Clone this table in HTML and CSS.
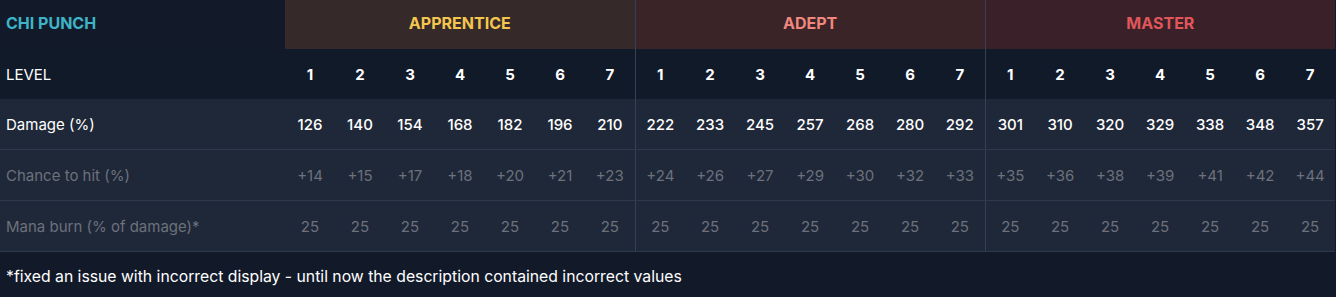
FILE: index.html
```html
<!DOCTYPE html>
<html>
<head>
<meta charset="utf-8">
<link rel="stylesheet" href="styles.css">
</head>
<body>
<table class="skill">
  <colgroup>
    <col class="c-name">
    <col span="21" class="c-lvl">
  </colgroup>
  <thead>
    <tr class="tiers">
      <th class="title">CHI PUNCH</th>
      <th colspan="7" class="tier apprentice">APPRENTICE</th>
      <th colspan="7" class="tier adept sep">ADEPT</th>
      <th colspan="7" class="tier master sep">MASTER</th>
    </tr>
    <tr class="levels">
      <th class="label">LEVEL</th>
      <th>1</th><th>2</th><th>3</th><th>4</th><th>5</th><th>6</th><th>7</th>
      <th class="sep">1</th><th>2</th><th>3</th><th>4</th><th>5</th><th>6</th><th>7</th>
      <th class="sep">1</th><th>2</th><th>3</th><th>4</th><th>5</th><th>6</th><th>7</th>
    </tr>
  </thead>
  <tbody>
    <tr class="main">
      <td class="label">Damage (%)</td>
      <td>126</td><td>140</td><td>154</td><td>168</td><td>182</td><td>196</td><td>210</td>
      <td class="sep">222</td><td>233</td><td>245</td><td>257</td><td>268</td><td>280</td><td>292</td>
      <td class="sep">301</td><td>310</td><td>320</td><td>329</td><td>338</td><td>348</td><td>357</td>
    </tr>
    <tr class="dim">
      <td class="label">Chance to hit (%)</td>
      <td>+14</td><td>+15</td><td>+17</td><td>+18</td><td>+20</td><td>+21</td><td>+23</td>
      <td class="sep">+24</td><td>+26</td><td>+27</td><td>+29</td><td>+30</td><td>+32</td><td>+33</td>
      <td class="sep">+35</td><td>+36</td><td>+38</td><td>+39</td><td>+41</td><td>+42</td><td>+44</td>
    </tr>
    <tr class="dim">
      <td class="label">Mana burn (% of damage)*</td>
      <td>25</td><td>25</td><td>25</td><td>25</td><td>25</td><td>25</td><td>25</td>
      <td class="sep">25</td><td>25</td><td>25</td><td>25</td><td>25</td><td>25</td><td>25</td>
      <td class="sep">25</td><td>25</td><td>25</td><td>25</td><td>25</td><td>25</td><td>25</td>
    </tr>
  </tbody>
</table>
<p class="note">*fixed an issue with incorrect display - until now the description contained incorrect values</p>
</body>
</html>
```

FILE: styles.css
```css
html, body {
  margin: 0;
  padding: 0;
  background: #121a29;
  font-family: "Inter", "Noto Sans", sans-serif;
  color: #ffffff;
}

.skill {
  border-collapse: collapse;
  table-layout: fixed;
  width: 1335px;
}

.c-name { width: 285px; }
.c-lvl { width: 50px; }

.skill th,
.skill td {
  padding: 0;
  text-align: center;
  white-space: nowrap;
}

.skill .label,
.skill .title {
  text-align: left;
  padding-left: 6px;
}

.tiers th {
  height: 45px;
  padding-bottom: 4px;
  font-size: 16px;
  font-weight: 700;
}

.title {
  color: #3db4c7;
  background: #121a29;
}

.apprentice { background: #352a29; color: #f5c64f; }
.adept { background: #3a2428; color: #f0877e; }
.master { background: #3a2029; color: #e0565a; }

.levels th {
  height: 50px;
  font-size: 15px;
  font-weight: 700;
  background: #111a29;
}

.levels th.label {
  font-weight: 400;
  font-size: 15px;
}

tbody tr {
  background: #1f2838;
}

tbody td {
  height: 50px;
  border-bottom: 1px solid #2d3a4d;
  font-size: 15px;
}

.main td {
  color: #ffffff;
  font-weight: 500;
}

.main td.label { font-weight: 400; }

.dim td {
  color: #6c717c;
}

.skill .sep {
  border-left: 1px solid #334155;
}

.note {
  margin: 0;
  padding: 15px 0 0 6px;
  font-size: 15.75px;
  color: #ffffff;
}
```
